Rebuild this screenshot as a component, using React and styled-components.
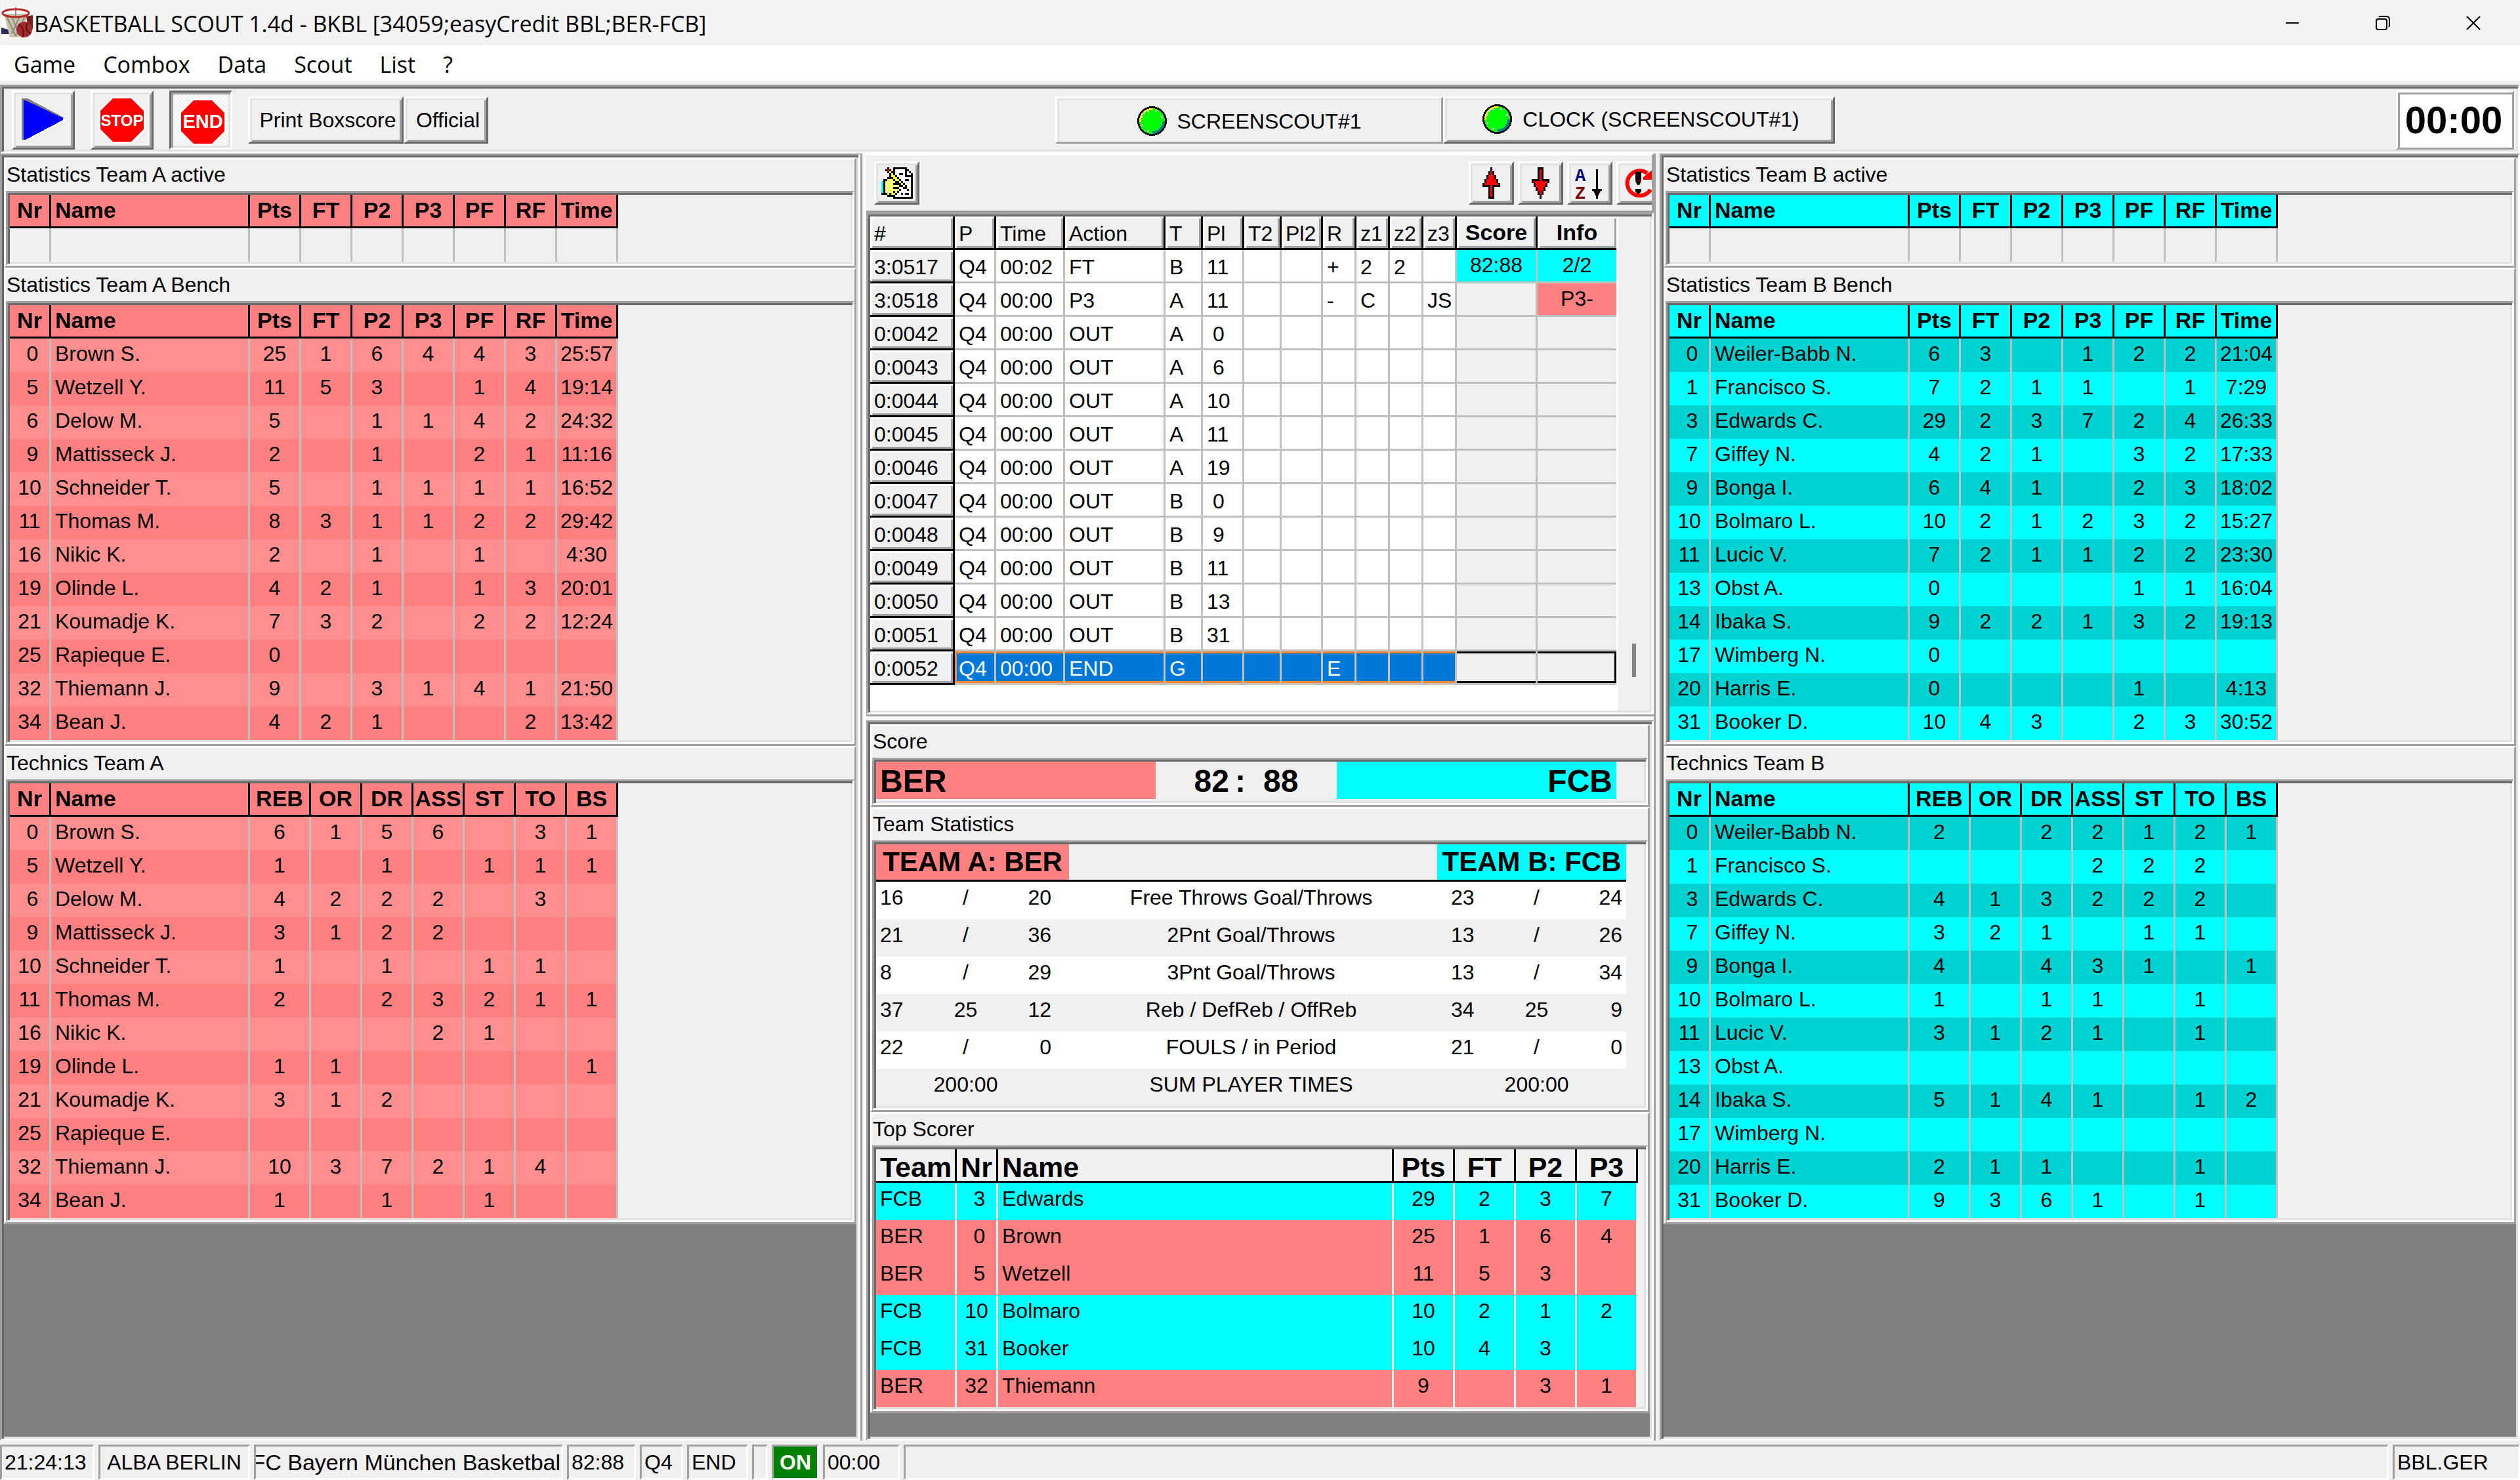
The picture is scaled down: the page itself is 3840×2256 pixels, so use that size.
import React, { useState } from 'react';
import styled, { createGlobalStyle, css } from 'styled-components';

const RED = '#ff8080';
const CYAN = '#00ffff';

const themes = {
  A: { head: RED, odd: '#ff8f8f', even: RED },
  B: { head: CYAN, odd: '#00d2d2', even: CYAN },
};

const GlobalStyle = createGlobalStyle`
  *, *::before, *::after {
    box-sizing: border-box;
  }
  body {
    margin: 0;
    background: #f0f0f0;
    color: #000;
    font-family: 'Liberation Sans', Arial, sans-serif;
    font-size: 32px;
    line-height: 36px;
  }
  button {
    font: inherit;
    color: inherit;
    margin: 0;
    padding: 0;
    border: 0;
    background: none;
    white-space: nowrap;
  }
`;

// Classic Windows bevels
const sunken = css`
  border: 3px solid;
  border-color: #a0a0a0 #fff #fff #a0a0a0;
  padding: 3px;
  box-shadow: inset 3px 3px #696969, inset -3px -3px #e3e3e3;
`;

const raised = css`
  border: 3px solid;
  border-color: #fff #a0a0a0 #a0a0a0 #fff;
`;

const Window = styled.div`
  min-height: 100vh;
  display: flex;
  flex-direction: column;
`;

/* ---------- title bar and menu ---------- */

const TitleBar = styled.header`
  height: 69px;
  display: flex;
  align-items: center;
  padding: 0 2px;
  background: #f3f3f3;
  font-family: 'Open Sans', 'Noto Sans', sans-serif;
  font-size: 34px;
`;

const Title = styled.h1`
  flex: 1;
  margin: 0;
  padding: 3px 0 0 2px;
  font-size: 34px;
  font-weight: 400;
  white-space: nowrap;
`;

const WindowButton = styled.button`
  width: 138px;
  height: 66px;
  display: flex;
  align-items: center;
  justify-content: center;
`;

const MenuBar = styled.nav`
  height: 54px;
  display: flex;
  align-items: center;
  gap: 42px;
  padding: 3px 0 0 21px;
  margin-bottom: 6px;
  background: #fff;
  font-family: 'Open Sans', 'Noto Sans', sans-serif;
  font-size: 34px;
`;

/* ---------- toolbar ---------- */

const ToolBar = styled.div`
  ${sunken}
  height: 105px;
`;

const ToolBarRow = styled.div`
  display: flex;
  justify-content: space-between;
  padding: 3px 3px 0 12px;
`;

const ToolGroup = styled.div`
  display: flex;
  align-items: center;
  margin-left: ${(p) => p.$indent || 0}px;
`;

const bevelButton = css`
  display: flex;
  align-items: center;
  justify-content: center;
  border: 3px solid;
  border-color: #fff #696969 #696969 #fff;
  box-shadow: inset 3px 3px #e3e3e3, inset -3px -3px #a0a0a0;
`;

const IconButton = styled.button`
  ${bevelButton}
  width: 96px;
  height: 90px;
  margin-right: 24px;
  ${(p) =>
    p.$down &&
    css`
      padding: 6px 0 0 6px;
      border-color: #696969 #fff #fff #696969;
      box-shadow: inset 3px 3px #a0a0a0, inset -3px -3px #e3e3e3;
      background: repeating-conic-gradient(#fff 0 25%, #f0f0f0 0 50%) 0 0 / 6px 6px;
    `}
`;

const TextButton = styled.button`
  ${bevelButton}
  width: ${(p) => p.$width}px;
  height: 72px;
  padding-left: 6px;
`;

const ScreenButton = styled.button`
  ${bevelButton}
  width: 597px;
  height: 72px;
  gap: 16px;
  padding: 0 0 3px 6px;
  ${(p) =>
    p.$down &&
    css`
      width: 591px;
      padding: 3px 0 0;
      border-color: #fff #a0a0a0 #a0a0a0 #fff;
      box-shadow: inset 3px 3px #e3e3e3;
    `}
`;

const GameClock = styled.output`
  width: 180px;
  height: 90px;
  display: flex;
  align-items: center;
  justify-content: center;
  padding-right: 4px;
  border: 3px solid;
  border-color: #fff #a0a0a0 #a0a0a0 #fff;
  box-shadow: inset 3px 3px #a0a0a0;
  background: #fff;
  font-size: 58px;
  font-weight: 700;
`;

/* ---------- panels ---------- */

const Columns = styled.main`
  flex: 1;
  display: grid;
  grid-template-columns: minmax(0, 1314fr) minmax(0, 1215fr) minmax(0, 1311fr);
`;

const Side = styled.div`
  display: flex;
  border-right: ${(p) => (p.$divider ? '3px solid #a0a0a0' : '0')};
`;

const Well = styled.div`
  ${sunken}
  flex: 1;
  min-width: 0;
  background: #808080;
`;

const PanelBox = styled.section`
  ${raised}
  background: #f0f0f0;
`;

const PanelTitle = styled.h2`
  height: 48px;
  margin: 0;
  padding: 5px 0 0 1px;
  font-size: 32px;
  font-weight: 400;
`;

const Frame = styled.div`
  ${sunken}
`;

const Middle = styled.div`
  display: flex;
  flex-direction: column;
  padding: 0 6px 0 3px;
`;

const MiddleBody = styled.div`
  flex: 1;
  display: flex;
  flex-direction: column;
  border-left: 3px solid #fff;
  border-right: 3px solid #a0a0a0;
`;

const LogToolBar = styled.div`
  ${raised}
  height: 90px;
  display: flex;
  align-items: flex-start;
  justify-content: space-between;
  padding: 9px 0 0 12px;
  border-left: 0;
  overflow: hidden;
`;

const LogTools = styled.div`
  width: 279px;
  display: flex;
  gap: 6px;
`;

const SmallButton = styled.button`
  ${bevelButton}
  flex: none;
  width: 69px;
  height: 66px;
`;

const Spacer = styled.div`
  height: 9px;
  border-top: 3px solid #a0a0a0;
  background: #f8f8f8;
`;

/* ---------- tables ---------- */

const Table = styled.table`
  table-layout: fixed;
  width: ${(p) => p.$width}px;
  border-spacing: 0;
  white-space: nowrap;
  th,
  td {
    overflow: hidden;
  }
`;

const StatHead = styled.th`
  height: 51px;
  padding: ${(p) => (p.$left ? '0 0 3px 6px' : '0 0 3px')};
  border-right: 3px solid #000;
  border-bottom: 3px solid #000;
  background: ${(p) => p.$bg};
  font-size: 34px;
  text-align: ${(p) => (p.$left ? 'left' : 'center')};
`;

const StatCell = styled.td`
  height: 51px;
  padding: ${(p) => (p.$left ? '0 0 6px 6px' : '0 0 6px')};
  border-right: 3px solid #c0c0c0;
  text-align: ${(p) => (p.$left ? 'left' : 'center')};
`;

const StatRow = styled.tr`
  background: ${(p) => p.$bg};
`;

const LogArea = styled.div`
  display: flex;
`;

const LogSheet = styled.div`
  flex: 1;
  min-width: 0;
  padding-bottom: 39px;
  background: #fff;
`;

const LogScroll = styled.div`
  width: 48px;
  display: flex;
  align-items: flex-end;
  justify-content: center;
  padding-bottom: 51px;
  &::after {
    content: '';
    width: 6px;
    height: 51px;
    background: #858585;
  }
`;

const fixedCell = css`
  height: 51px;
  padding: 3px 0 0 6px;
  border-right: 3px solid #000;
  border-bottom: 3px solid #000;
  background: #f0f0f0;
  box-shadow: inset 3px 3px #fff, inset -3px -3px #a0a0a0;
  font-weight: 400;
  text-align: left;
`;

const LogHead = styled.th`
  ${fixedCell}
  ${(p) =>
    p.$bold &&
    css`
      padding: 0;
      font-size: 34px;
      font-weight: 700;
      text-align: center;
    `}
  &:last-child {
    border-right: 0;
  }
`;

const LogNumber = styled.th`
  ${fixedCell}
`;

const LogCell = styled.td`
  height: 51px;
  padding: 3px 0 0 6px;
  border-right: 3px solid #c0c0c0;
  border-bottom: 3px solid #c0c0c0;
  background: #fff;
  ${(p) =>
    p.$info &&
    css`
      padding: 0 0 3px;
      background: ${p.$bg || '#f0f0f0'};
      text-align: center;
    `}
  &:last-child {
    border-right: 0;
  }
`;

const LogRow = styled.tr`
  ${(p) =>
    p.$selected &&
    css`
      ${LogCell} {
        background: #0078d7;
        color: #fff;
        box-shadow: inset 0 3px #ff8728, inset 0 -3px #ff8728;
      }
      ${LogCell}:nth-child(2) {
        box-shadow: inset 3px 3px #ff8728, inset 0 -3px #ff8728;
      }
      ${LogCell}:nth-last-child(-n + 2) {
        background: #f0f0f0;
        box-shadow: inset 0 3px #000, inset 0 -3px #000;
      }
      ${LogCell}:last-child {
        box-shadow: inset 0 3px #000, inset -3px -3px #000;
      }
    `}
`;

const ScoreLine = styled.div`
  height: 60px;
  display: flex;
  padding-bottom: 3px;
  font-size: 48px;
  font-weight: 700;
  line-height: 60px;
`;

const ScoreTeam = styled.div`
  width: 426px;
  padding: 0 6px;
  background: ${(p) => p.$bg};
  text-align: ${(p) => p.$align};
`;

const ScoreValue = styled.div`
  width: 276px;
  display: flex;
  justify-content: center;
`;

const ScoreColon = styled.span`
  padding: 0 27px 0 9px;
`;

const TeamHead = styled.th`
  height: 57px;
  padding: 0 6px;
  border-bottom: 3px solid #000;
  background: ${(p) => p.$bg};
  font-size: 42px;
  text-align: ${(p) => p.$align};
`;

const TeamRow = styled.tr`
  background: ${(p) => (p.$white ? '#fff' : '#f0f0f0')};
`;

const TeamCell = styled.td`
  height: 57px;
  padding: 0 6px 9px;
  text-align: ${(p) => p.$align || 'center'};
`;

const TopHead = styled.th`
  height: 51px;
  padding: ${(p) => (p.$left ? '6px 0 0 6px' : '6px 0 0')};
  border-right: 3px solid #000;
  border-bottom: 3px solid #000;
  font-size: 43px;
  text-align: ${(p) => (p.$left ? 'left' : 'center')};
`;

const TopCell = styled.td`
  height: 57px;
  padding: ${(p) => (p.$left ? '0 0 9px 6px' : '0 0 9px')};
  border-right: 3px solid #f0f0f0;
  text-align: ${(p) => (p.$left ? 'left' : 'center')};
`;

/* ---------- status bar ---------- */

const StatusBar = styled.footer`
  height: 60px;
  display: flex;
  gap: 6px;
  padding-top: 6px;
`;

const StatusField = styled.div`
  width: ${(p) => (p.$width ? `${p.$width}px` : 'auto')};
  flex: ${(p) => (p.$width ? 'none' : '1')};
  display: flex;
  align-items: center;
  justify-content: ${(p) => (p.$center ? 'center' : 'flex-start')};
  padding-left: ${(p) => (p.$center ? 0 : 4)}px;
  border: 3px solid;
  border-color: #a0a0a0 #fff #fff #a0a0a0;
  font-size: ${(p) => (p.$large ? 34 : 32)}px;
  white-space: nowrap;
  overflow: hidden;
  ${(p) =>
    p.$on &&
    css`
      background: #008000;
      color: #fff;
      font-weight: 700;
    `}
`;

/* ---------- icons ---------- */

const palette = { K: '#000', R: '#f00', W: '#fff', Y: '#ff0', C: '#0ff' };

// Draws an icon from rows of palette letters, three screen pixels each
const PixelIcon = ({ rows }) => (
  <svg
    width={rows[0].length * 3}
    height={rows.length * 3}
    viewBox={`0 0 ${rows[0].length} ${rows.length}`}
    shapeRendering="crispEdges"
    aria-hidden="true"
  >
    {rows.map((row, y) =>
      [...row].map((c, x) =>
        palette[c] ? <rect key={`${x}-${y}`} x={x} y={y} width="1" height="1" fill={palette[c]} /> : null
      )
    )}
  </svg>
);

const upRows = [
  '....K....',
  '....K....',
  '...KRK...',
  '...KRK...',
  '..KRRRK..',
  '..KRRRK..',
  '.KRRRRRK.',
  '.KRRRRRK.',
  'KRRRRRRRK',
  'KKKKRKKKK',
  '...KRK...',
  '...KRK...',
  '...KRK...',
  '...KRK...',
  '...KRK...',
  '...KKK...',
];

const downRows = [...upRows].reverse();

const editRows = [
  '...K..KKKKKKK...',
  '..KRK.KWWWWWKK..',
  '...KYKKWWWWWKWK.',
  '....KYKWWKKWKWWK',
  '....KYYKWWWWKKKK',
  '...KKKYYKWWWWWWK',
  '.KKYWYKYYKWWKKWK',
  'CKYWYWYKKYKWWWWK',
  'CKWYWYKKKKYKWWWK',
  'CKYWYWYWYKKYKWWK',
  'CKWYWYKKKWWKKWWK',
  'CKYWYWYWYKWWWKWK',
  'CKWYWYKYKWWWWWWK',
  'KKKYKYYKWWKWKKWK',
  '...KKKKWWWWWWWWK',
  '......KKKKKKKKKK',
];

const StopSign = ({ label, size }) => (
  <svg width="72" height="72" viewBox="0 0 72 72" aria-hidden="true">
    <path d="M21 0H51L72 21V51L51 72H21L0 51V21Z" fill="#fff" />
    <path d="M22 3H50L69 22V50L50 69H22L3 50V22Z" fill="#f00" />
    <text
      x="36"
      y="45"
      fill="#fff"
      fontFamily="Liberation Sans, Arial, sans-serif"
      fontSize={size}
      fontWeight="700"
      textAnchor="middle"
    >
      {label}
    </text>
  </svg>
);

const PlayIcon = () => (
  <svg width="66" height="66" viewBox="0 0 22 22" shapeRendering="crispEdges" aria-hidden="true">
    <path d="M1 22L22 11.500V10.500L1 20Z" fill="#fff" />
    <path d="M0 0H3L22 10L1 10V21H0Z" fill="#808080" />
    <path d="M1 1H2L21 10V11L2 21H1Z" fill="#00f" />
  </svg>
);

const Led = () => (
  <svg width="45" height="45" viewBox="0 0 15 15" shapeRendering="crispEdges" aria-hidden="true">
    <circle cx="7.5" cy="7.5" r="7.5" fill="#000" />
    <circle cx="7.5" cy="7.5" r="6.5" fill="#0f0" />
    <path d="M1.500 8A6 6 0 0 1 8 1.500" fill="none" stroke="#ff0" />
    <path d="M13.500 7.500A6 6 0 0 1 7.500 13.500" fill="none" stroke="#008080" strokeWidth="1.300" />
    <path d="M3 3h1v1h-1zM5 2h1v1h-1zM9 2h1v1h-1zM12 5h1v1h-1zM2 5h1v1h-1zM2 9h1v1h-1zM5 12h1v1h-1z" fill="#c0c0c0" />
  </svg>
);

const SortIcon = () => (
  <svg width="48" height="48" viewBox="0 0 48 48" aria-hidden="true">
    <g fontFamily="Liberation Mono, monospace" fontSize="27" fontWeight="700">
      <text x="1" y="21" fill="#000080">
        A
      </text>
      <text x="1" y="48" fill="#800000">
        Z
      </text>
    </g>
    <path d="M33 3h3v30h6v3h-2l-4 8v4h-3v-4l-4-8h-2v-3h6z" fill="#000" />
  </svg>
);

const RefreshIcon = () => (
  <svg width="48" height="48" viewBox="0 0 48 48" aria-hidden="true">
    <path d="M41 34A19 19 0 1 1 36 9" fill="none" stroke="#f00" strokeWidth="6" />
    <path d="M46 2V19H30V15Z" fill="#f00" />
    <path d="M18 7h9v14l-3 6h-3l-3-6zM18 33h9v4l-3 3h-3l-3-3z" fill="#000" />
    <path d="M18 19h3v3h-3zM24 19h3v3h-3z" fill="#800000" />
  </svg>
);

const Logo = () => (
  <svg width="48" height="48" viewBox="0 0 48 48" aria-hidden="true">
    <rect width="48" height="48" fill="#fdfbf9" />
    <path d="M0 31L17 36V41L0 41Z" fill="#2f2c58" />
    <path d="M4 10L13 46H27L41 10Z" fill="#c9c3ae" />
    <path d="M8 14L22 44M16 14L26 40M36 14L22 44M28 14L16 40M22 0V16" fill="none" stroke="#8f8b78" strokeWidth="2" />
    <ellipse cx="22" cy="9" rx="20" ry="6" fill="none" stroke="#b8262b" strokeWidth="3" />
    <path d="M38 14L48 12V34L40 26Z" fill="#7c1f1c" />
    <circle cx="35" cy="34" r="12" fill="#a32a2c" />
    <path d="M27 26Q36 34 33 46M40 24Q34 34 45 40" fill="none" stroke="#5e1213" strokeWidth="2" />
  </svg>
);

/* ---------- data ---------- */

const statColumns = ['Pts', 'FT', 'P2', 'P3', 'PF', 'RF', 'Time'];
const techColumns = ['REB', 'OR', 'DR', 'ASS', 'ST', 'TO', 'BS'];
const statWidths = [63, 303, 78, 78, 78, 78, 78, 78, 93];
const techWidths = [63, 303, 93, 78, 78, 78, 78, 78, 78];

const teamA = [
  [0, 'Brown S.', [25, 1, 6, 4, 4, 3, '25:57'], [6, 1, 5, 6, '', 3, 1]],
  [5, 'Wetzell Y.', [11, 5, 3, '', 1, 4, '19:14'], [1, '', 1, '', 1, 1, 1]],
  [6, 'Delow M.', [5, '', 1, 1, 4, 2, '24:32'], [4, 2, 2, 2, '', 3, '']],
  [9, 'Mattisseck J.', [2, '', 1, '', 2, 1, '11:16'], [3, 1, 2, 2, '', '', '']],
  [10, 'Schneider T.', [5, '', 1, 1, 1, 1, '16:52'], [1, '', 1, '', 1, 1, '']],
  [11, 'Thomas M.', [8, 3, 1, 1, 2, 2, '29:42'], [2, '', 2, 3, 2, 1, 1]],
  [16, 'Nikic K.', [2, '', 1, '', 1, '', '4:30'], ['', '', '', 2, 1, '', '']],
  [19, 'Olinde L.', [4, 2, 1, '', 1, 3, '20:01'], [1, 1, '', '', '', '', 1]],
  [21, 'Koumadje K.', [7, 3, 2, '', 2, 2, '12:24'], [3, 1, 2, '', '', '', '']],
  [25, 'Rapieque E.', [0, '', '', '', '', '', ''], ['', '', '', '', '', '', '']],
  [32, 'Thiemann J.', [9, '', 3, 1, 4, 1, '21:50'], [10, 3, 7, 2, 1, 4, '']],
  [34, 'Bean J.', [4, 2, 1, '', '', 2, '13:42'], [1, '', 1, '', 1, '', '']],
];

const teamB = [
  [0, 'Weiler-Babb N.', [6, 3, '', 1, 2, 2, '21:04'], [2, '', 2, 2, 1, 2, 1]],
  [1, 'Francisco S.', [7, 2, 1, 1, '', 1, '7:29'], ['', '', '', 2, 2, 2, '']],
  [3, 'Edwards C.', [29, 2, 3, 7, 2, 4, '26:33'], [4, 1, 3, 2, 2, 2, '']],
  [7, 'Giffey N.', [4, 2, 1, '', 3, 2, '17:33'], [3, 2, 1, '', 1, 1, '']],
  [9, 'Bonga I.', [6, 4, 1, '', 2, 3, '18:02'], [4, '', 4, 3, 1, '', 1]],
  [10, 'Bolmaro L.', [10, 2, 1, 2, 3, 2, '15:27'], [1, '', 1, 1, '', 1, '']],
  [11, 'Lucic V.', [7, 2, 1, 1, 2, 2, '23:30'], [3, 1, 2, 1, '', 1, '']],
  [13, 'Obst A.', [0, '', '', '', 1, 1, '16:04'], ['', '', '', '', '', '', '']],
  [14, 'Ibaka S.', [9, 2, 2, 1, 3, 2, '19:13'], [5, 1, 4, 1, '', 1, 2]],
  [17, 'Wimberg N.', [0, '', '', '', '', '', ''], ['', '', '', '', '', '', '']],
  [20, 'Harris E.', [0, '', '', '', 1, '', '4:13'], [2, 1, 1, '', '', 1, '']],
  [31, 'Booker D.', [10, 4, 3, '', 2, 3, '30:52'], [9, 3, 6, 1, '', 1, '']],
];

const logColumns = ['#', 'P', 'Time', 'Action', 'T', 'Pl', 'T2', 'Pl2', 'R', 'z1', 'z2', 'z3', 'Score', 'Info'];
const logWidths = [129, 63, 105, 153, 57, 63, 57, 63, 51, 51, 51, 51, 123, 120];

const out = (id, team, player) => [id, 'Q4', '00:00', 'OUT', team, player, '', '', '', '', '', '', '', ''];

const logRows = [
  ['3:0517', 'Q4', '00:02', 'FT', 'B', 11, '', '', '+', '2', '2', '', '82:88', '2/2'],
  ['3:0518', 'Q4', '00:00', 'P3', 'A', 11, '', '', '-', 'C', '', 'JS', '', 'P3-'],
  out('0:0042', 'A', 0),
  out('0:0043', 'A', 6),
  out('0:0044', 'A', 10),
  out('0:0045', 'A', 11),
  out('0:0046', 'A', 19),
  out('0:0047', 'B', 0),
  out('0:0048', 'B', 9),
  out('0:0049', 'B', 11),
  out('0:0050', 'B', 13),
  out('0:0051', 'B', 31),
  ['0:0052', 'Q4', '00:00', 'END', 'G', '', '', '', 'E', '', '', '', '', ''],
];

const teamStats = [
  [16, '/', 20, 'Free Throws Goal/Throws', 23, '/', 24],
  [21, '/', 36, '2Pnt Goal/Throws', 13, '/', 26],
  [8, '/', 29, '3Pnt Goal/Throws', 13, '/', 34],
  [37, 25, 12, 'Reb / DefReb / OffReb', 34, 25, 9],
  [22, '/', 0, 'FOULS / in Period', 21, '/', 0],
];

const topScorers = [
  ['FCB', 3, 'Edwards', 29, 2, 3, 7],
  ['BER', 0, 'Brown', 25, 1, 6, 4],
  ['BER', 5, 'Wetzell', 11, 5, 3, ''],
  ['FCB', 10, 'Bolmaro', 10, 2, 1, 2],
  ['FCB', 31, 'Booker', 10, 4, 3, ''],
  ['BER', 32, 'Thiemann', 9, '', 3, 1],
];

const topWidths = [123, 63, 603, 93, 93, 93, 93];

// One-digit numbers get a leading blank
const padNr = (n) => (n !== '' && n < 10 ? `\u00a0${n}` : n);

const sum = (list) => list.reduce((a, b) => a + b, 0);

const Cols = ({ widths }) => (
  <colgroup>
    {widths.map((w, i) => (
      <col key={i} style={{ width: w }} />
    ))}
  </colgroup>
);

/* ---------- components ---------- */

const Panel = ({ title, children }) => (
  <PanelBox aria-label={title}>
    <PanelTitle>{title}</PanelTitle>
    <Frame>{children}</Frame>
  </PanelBox>
);

const PlayerTable = ({ team, columns, widths, players }) => {
  const colors = themes[team];
  return (
    <Table $width={sum(widths)}>
      <Cols widths={widths} />
      <thead>
        <tr>
          <StatHead $bg={colors.head}>Nr</StatHead>
          <StatHead $bg={colors.head} $left>
            Name
          </StatHead>
          {columns.map((c) => (
            <StatHead key={c} $bg={colors.head}>
              {c}
            </StatHead>
          ))}
        </tr>
      </thead>
      <tbody>
        {players.map(([nr, name, values], i) => (
          <StatRow key={nr} $bg={i % 2 ? colors.even : colors.odd}>
            <StatCell>{padNr(nr)}</StatCell>
            <StatCell $left>{name}</StatCell>
            {values.map((v, j) => (
              <StatCell key={j}>{v}</StatCell>
            ))}
          </StatRow>
        ))}
        {players.length === 0 && (
          <tr>
            {widths.map((w, i) => (
              <StatCell key={i} />
            ))}
          </tr>
        )}
      </tbody>
    </Table>
  );
};

const TeamColumn = ({ team, players, divider }) => (
  <Side $divider={divider}>
    <Well>
      <Panel title={`Statistics Team ${team} active`}>
        <PlayerTable team={team} columns={statColumns} widths={statWidths} players={[]} />
      </Panel>
      <Panel title={`Statistics Team ${team} Bench`}>
        <PlayerTable team={team} columns={statColumns} widths={statWidths} players={players} />
      </Panel>
      <Panel title={`Technics Team ${team}`}>
        <PlayerTable
          team={team}
          columns={techColumns}
          widths={techWidths}
          players={players.map(([nr, name, , tech]) => [nr, name, tech])}
        />
      </Panel>
    </Well>
  </Side>
);

const GameLog = () => {
  const [selected, setSelected] = useState('0:0052');

  return (
    <Frame>
      <LogArea>
        <LogSheet>
          <Table $width={sum(logWidths)}>
            <Cols widths={logWidths} />
            <thead>
              <tr>
                {logColumns.map((c, i) => (
                  <LogHead key={c} $bold={i > 11}>
                    {c}
                  </LogHead>
                ))}
              </tr>
            </thead>
            <tbody>
              {logRows.map(([id, ...cells]) => (
                <LogRow key={id} $selected={id === selected} onClick={() => setSelected(id)}>
                  <LogNumber scope="row">{id}</LogNumber>
                  {cells.map((c, i) => (
                    <LogCell
                      key={i}
                      $info={i > 10}
                      $bg={c !== '' ? (cells[3] === 'A' ? RED : CYAN) : undefined}
                    >
                      {i === 4 ? padNr(c) : c}
                    </LogCell>
                  ))}
                </LogRow>
              ))}
            </tbody>
          </Table>
        </LogSheet>
        <LogScroll />
      </LogArea>
    </Frame>
  );
};

const TeamStatistics = () => (
  <Table $width={1143}>
    <Cols widths={[91, 91, 91, 21, 561, 15, 91, 91, 91]} />
    <thead>
      <tr>
        <TeamHead colSpan={4} $bg={RED} $align="center">
          TEAM A: BER
        </TeamHead>
        <TeamHead as="td" />
        <TeamHead colSpan={4} $bg={CYAN} $align="center">
          TEAM B: FCB
        </TeamHead>
      </tr>
    </thead>
    <tbody>
      {teamStats.map(([a1, a2, a3, label, b1, b2, b3], i) => (
        <TeamRow key={label} $white={i % 2 === 0}>
          <TeamCell $align="left">{a1}</TeamCell>
          <TeamCell>{a2}</TeamCell>
          <TeamCell $align="right">{a3}</TeamCell>
          <TeamCell colSpan={3}>{label}</TeamCell>
          <TeamCell $align="left">{b1}</TeamCell>
          <TeamCell>{b2}</TeamCell>
          <TeamCell $align="right">{b3}</TeamCell>
        </TeamRow>
      ))}
      <TeamRow>
        <TeamCell colSpan={3}>200:00</TeamCell>
        <TeamCell colSpan={3}>SUM PLAYER TIMES</TeamCell>
        <TeamCell colSpan={3}>200:00</TeamCell>
      </TeamRow>
    </tbody>
  </Table>
);

const TopScorer = () => (
  <Table $width={sum(topWidths)}>
    <Cols widths={topWidths} />
    <thead>
      <tr>
        <TopHead $left>Team</TopHead>
        <TopHead>Nr</TopHead>
        <TopHead $left>Name</TopHead>
        <TopHead>Pts</TopHead>
        <TopHead>FT</TopHead>
        <TopHead>P2</TopHead>
        <TopHead>P3</TopHead>
      </tr>
    </thead>
    <tbody>
      {topScorers.map(([team, nr, name, ...values]) => (
        <StatRow key={nr} $bg={team === 'BER' ? RED : CYAN}>
          <TopCell $left>{team}</TopCell>
          <TopCell>{padNr(nr)}</TopCell>
          <TopCell $left>{name}</TopCell>
          {values.map((v, i) => (
            <TopCell key={i}>{v}</TopCell>
          ))}
        </StatRow>
      ))}
    </tbody>
  </Table>
);

const App = () => (
  <Window>
    <GlobalStyle />

    <TitleBar>
      <Logo />
      <Title>BASKETBALL SCOUT 1.4d - BKBL [34059;easyCredit BBL;BER-FCB]</Title>
      <WindowButton aria-label="Minimize">
        <svg width="22" height="22" viewBox="0 0 22 22" aria-hidden="true">
          <path d="M1 11H21" stroke="#000" strokeWidth="2" />
        </svg>
      </WindowButton>
      <WindowButton aria-label="Restore">
        <svg width="22" height="22" viewBox="0 0 22 22" fill="none" stroke="#000" strokeWidth="2" aria-hidden="true">
          <rect x="1" y="5" width="16" height="16" rx="3" />
          <path d="M5 2Q6 1 8 1H16Q21 1 21 6V14Q21 16 20 17" />
        </svg>
      </WindowButton>
      <WindowButton aria-label="Close">
        <svg width="22" height="22" viewBox="0 0 22 22" aria-hidden="true">
          <path d="M1 1L21 21M21 1L1 21" stroke="#000" strokeWidth="2" />
        </svg>
      </WindowButton>
    </TitleBar>

    <MenuBar>
      {['Game', 'Combox', 'Data', 'Scout', 'List', '?'].map((item) => (
        <button key={item}>{item}</button>
      ))}
    </MenuBar>

    <ToolBar>
      <ToolBarRow>
        <ToolGroup>
          <IconButton aria-label="Start">
            <PlayIcon />
          </IconButton>
          <IconButton aria-label="Stop">
            <StopSign label="STOP" size={24} />
          </IconButton>
          <IconButton aria-label="End" $down>
            <StopSign label="END" size={29} />
          </IconButton>
          <TextButton $width={237}>Print Boxscore</TextButton>
          <TextButton $width={129}>Official</TextButton>
        </ToolGroup>
        <ToolGroup $indent={9}>
          <ScreenButton $down>
            <Led />
            SCREENSCOUT#1
          </ScreenButton>
          <ScreenButton>
            <Led />
            CLOCK (SCREENSCOUT#1)
          </ScreenButton>
        </ToolGroup>
        <GameClock>00:00</GameClock>
      </ToolBarRow>
    </ToolBar>

    <Columns>
      <TeamColumn team="A" players={teamA} divider />

      <Middle>
        <MiddleBody>
          <LogToolBar>
            <SmallButton aria-label="Edit">
              <PixelIcon rows={editRows} />
            </SmallButton>
            <LogTools>
              <SmallButton aria-label="Move up">
                <PixelIcon rows={upRows} />
              </SmallButton>
              <SmallButton aria-label="Move down">
                <PixelIcon rows={downRows} />
              </SmallButton>
              <SmallButton aria-label="Sort">
                <SortIcon />
              </SmallButton>
              <SmallButton aria-label="Refresh">
                <RefreshIcon />
              </SmallButton>
            </LogTools>
          </LogToolBar>
          <GameLog />
          <Spacer />
          <Well>
            <Panel title="Score">
              <ScoreLine>
                <ScoreTeam $bg={RED} $align="left">
                  BER
                </ScoreTeam>
                <ScoreValue>
                  <span>82</span>
                  <ScoreColon>:</ScoreColon>
                  <span>88</span>
                </ScoreValue>
                <ScoreTeam $bg={CYAN} $align="right">
                  FCB
                </ScoreTeam>
              </ScoreLine>
            </Panel>
            <Panel title="Team Statistics">
              <TeamStatistics />
            </Panel>
            <Panel title="Top Scorer">
              <TopScorer />
            </Panel>
          </Well>
        </MiddleBody>
      </Middle>

      <TeamColumn team="B" players={teamB} />
    </Columns>

    <StatusBar>
      <StatusField $width={144}>21:24:13</StatusField>
      <StatusField $width={231} $center>
        ALBA BERLIN
      </StatusField>
      <StatusField $width={471} $center $large>
        FC Bayern München Basketball
      </StatusField>
      <StatusField $width={105}>82:88</StatusField>
      <StatusField $width={66}>Q4</StatusField>
      <StatusField $width={93}>END</StatusField>
      <StatusField $width={24} />
      <StatusField $width={72} $center $on>
        ON
      </StatusField>
      <StatusField $width={117}>00:00</StatusField>
      <StatusField />
      <StatusField $width={194}>BBL.GER</StatusField>
    </StatusBar>
  </Window>
);

export default App;
